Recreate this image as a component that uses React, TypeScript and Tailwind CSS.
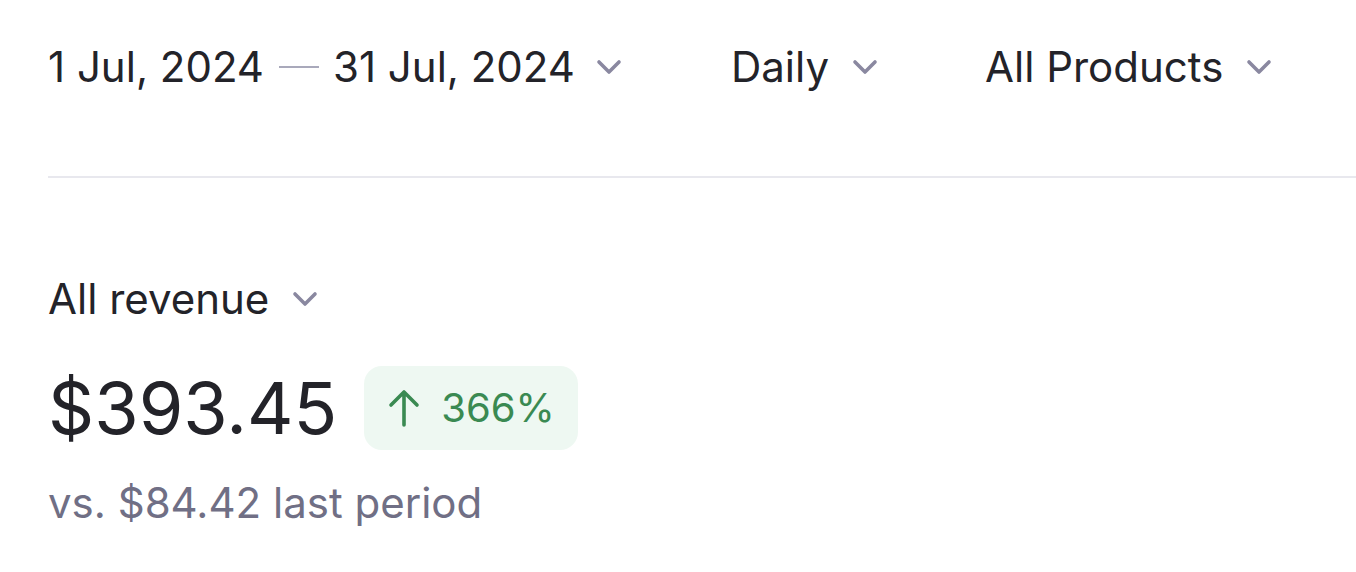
function Chevron() {
  return (
    <svg width="28" height="20" viewBox="0 0 28 20" fill="none" stroke="#8a88a0" strokeWidth="3.6" strokeLinecap="round" strokeLinejoin="round" aria-hidden="true">
      <path d="M4 5l10 10 10-10" />
    </svg>
  );
}

function Picker({ label, className = "" }: { label: string; className?: string }) {
  return (
    <button className={`flex items-center gap-[22px] text-[42px] leading-none text-[#232329] ${className}`}>
      <span>{label}</span>
      <Chevron />
    </button>
  );
}

export default function App() {
  return (
    <div className="h-[572px] w-[1356px] overflow-hidden bg-white pl-12 font-['Inter',sans-serif]">
      <div className="flex h-[176px] items-start pt-[46px]">
        <button className="flex items-center text-[42px] leading-none text-[#232329]">
          <span>1 Jul, 2024</span>
          <span className="ml-[15px] mr-[14px] h-[2px] w-[40px] bg-[#a9a9bb]" />
          <span>31 Jul, 2024</span>
          <span className="ml-[20px]">
            <Chevron />
          </span>
        </button>
        <Picker label="Daily" className="ml-[108px]" />
        <Picker label="All Products" className="ml-[106px]" />
      </div>
      <div className="h-[2px] bg-[#e8e8ee]" />

      <div className="pt-[100px]">
        <Picker label="All revenue" />
        <div className="mt-[46px] flex items-center gap-[27px]">
          <span className="text-[72px] leading-none text-[#232329]">$393.45</span>
          <span className="flex h-[84px] items-center gap-[20px] rounded-[18px] bg-[#eef8f2] pl-[23px] pr-[23px] text-[40px] text-[#3a8a52]">
            <svg width="34" height="38" viewBox="0 0 34 38" fill="none" stroke="currentColor" strokeWidth="3.6" strokeLinecap="round" strokeLinejoin="round" aria-hidden="true">
              <path d="M4 16L17 3l13 13M17 3v33" />
            </svg>
            366%
          </span>
        </div>
        <p className="mt-[32px] text-[42px] leading-none text-[#706f85]">vs. $84.42 last period</p>
      </div>
    </div>
  );
}
